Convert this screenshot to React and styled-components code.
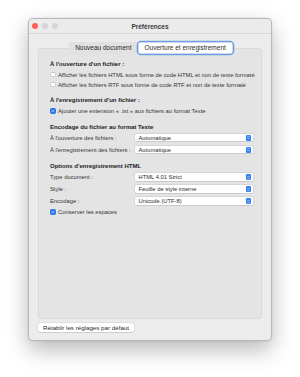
import styled, {createGlobalStyle} from 'styled-components'

const Global = createGlobalStyle`
  html, body {
    margin: 0;
    background: #ffffff;
  }
  body {
    font-family: "Liberation Sans", Arial, sans-serif;
    color: #262626;
  }
`

const Page = styled.div`
  width: 300px;
  height: 377px;
  padding: 18px 0 0 28px;
  box-sizing: border-box;
`

const Window = styled.div`
  width: 244px;
  height: 323px;
  display: flex;
  flex-direction: column;
  background: #ececec;
  border-radius: 5px;
  border: 0.5px solid rgba(0,0,0,0.22);
  box-shadow: 0 9px 22px rgba(0,0,0,0.28), 0 0 2px rgba(0,0,0,0.12);
  box-sizing: border-box;
  overflow: hidden;
`

const TitleBar = styled.div`
  height: 14px;
  display: grid;
  grid-template-columns: 60px 1fr 60px;
  align-items: center;
  border-bottom: 1px solid #d6d6d6;
  background: #ebebeb;
`

const Lights = styled.div`
  display: flex;
  gap: 4px;
  padding-left: 3px;
`

const Light = styled.span`
  width: 6px;
  height: 6px;
  border-radius: 50%;
  background: ${p => p.color};
`

const Title = styled.div`
  text-align: center;
  font-size: 6.5px;
  font-weight: bold;
  color: #3a3a3a;
`

const Body = styled.div`
  flex: 1;
  display: flex;
  flex-direction: column;
  padding: 8px 9px 8px 9px;
`

const Tabs = styled.div`
  align-self: center;
  display: flex;
  align-items: center;
  height: 12px;
  margin-left: 2px;
  margin-bottom: -6px;
  background: #e1e1e1;
  border-radius: 3px;
  position: relative;
  z-index: 1;
`

const Tab = styled.div`
  height: 12px;
  line-height: 12px;
  padding: 0 6px;
  font-size: 6.5px;
  white-space: nowrap;
  color: #2a2a2a;
  box-sizing: border-box;
  ${p => p.active && `
    padding: 0 7px;
    background: #ffffff;
    border-radius: 3px;
    box-shadow: 0 0 0 1.3px #6c9fe2, inset 0 0 0 0.5px #8fb6ea;
  `}
`

const Panel = styled.div`
  flex: 1;
  background: #e4e4e4;
  border: 0.5px solid #d9d9d9;
  border-radius: 3px;
  padding: 9.5px 8px 0 11px;
  display: flex;
  flex-direction: column;
  white-space: nowrap;
`

const Section = styled.div`
  display: flex;
  flex-direction: column;
  & + & {
    margin-top: 5.5px;
  }
`

const Heading = styled.div`
  height: 10px;
  line-height: 10px;
  font-size: 6px;
  font-weight: bold;
  color: #222;
`

const CheckRow = styled.label`
  height: 10px;
  display: flex;
  align-items: center;
  gap: 2.5px;
  font-size: 5.8px;
  color: #333;
  ${Heading} + & {
    margin-top: 1px;
  }
`

const Box = styled.span`
  width: 5.5px;
  height: 5.5px;
  flex: none;
  border-radius: 1.5px;
  box-sizing: border-box;
  display: flex;
  align-items: center;
  justify-content: center;
  background: ${p => (p.checked ? '#2d7ff3' : '#ffffff')};
  border: 0.5px solid ${p => (p.checked ? '#2a74e0' : '#c9c9c9')};
`

const PopupRow = styled.div`
  height: 12px;
  display: grid;
  grid-template-columns: 85px 1fr;
  align-items: center;
  font-size: 5.8px;
  color: #333;
`

const Popup = styled.div`
  height: 7.5px;
  background: #ffffff;
  border-radius: 1.5px;
  box-shadow: 0 0 0 0.5px rgba(0,0,0,0.12), 0 0.5px 0.5px rgba(0,0,0,0.1);
  display: flex;
  align-items: center;
  justify-content: space-between;
  padding: 0 2.5px 0 3.5px;
  font-size: 5.8px;
  color: #2a2a2a;
`

const Stepper = styled.span`
  width: 4.5px;
  height: 6px;
  border-radius: 1.2px;
  background: #2f7ff2;
  display: flex;
  align-items: center;
  justify-content: center;
`

const Footer = styled.div`
  display: flex;
  margin-top: 4px;
`

const Button = styled.button`
  height: 9.5px;
  padding: 0 5px;
  border: none;
  border-radius: 2px;
  background: #ffffff;
  box-shadow: 0 0 0 0.5px rgba(0,0,0,0.12), 0 0.5px 0.5px rgba(0,0,0,0.15);
  font-family: "Liberation Sans", Arial, sans-serif;
  font-size: 6.2px;
  color: #2a2a2a;
  line-height: 9.5px;
  white-space: nowrap;
`

function Check({checked, children}) {
  return (
    <CheckRow>
      <Box checked={checked}>
        {checked && (
          <svg width="4" height="4" viewBox="0 0 10 10">
            <path d="M2 5.2 L4.2 7.4 L8.2 2.6" fill="none" stroke="#fff" strokeWidth="1.8" strokeLinecap="round" strokeLinejoin="round" />
          </svg>
        )}
      </Box>
      {children}
    </CheckRow>
  )
}

function Select({label, value}) {
  return (
    <PopupRow>
      <span>{label}</span>
      <Popup>
        <span>{value}</span>
        <Stepper>
          <svg width="3" height="5" viewBox="0 0 6 10">
            <path d="M1 3.8 L3 1.8 L5 3.8 M1 6.2 L3 8.2 L5 6.2" fill="none" stroke="#fff" strokeWidth="1.1" strokeLinecap="round" strokeLinejoin="round" />
          </svg>
        </Stepper>
      </Popup>
    </PopupRow>
  )
}

export default function App() {
  return (
    <Page>
      <Global />
      <Window>
        <TitleBar>
          <Lights>
            <Light color="#fe5f57" />
            <Light color="#d6d6d6" />
            <Light color="#d6d6d6" />
          </Lights>
          <Title>Préférences</Title>
          <span />
        </TitleBar>
        <Body>
          <Tabs>
            <Tab>Nouveau document</Tab>
            <Tab active>Ouverture et enregistrement</Tab>
          </Tabs>
          <Panel>
            <Section>
              <Heading>À l'ouverture d'un fichier :</Heading>
              <Check>Afficher les fichiers HTML sous forme de code HTML et non de texte formaté</Check>
              <Check>Afficher les fichiers RTF sous forme de code RTF et non de texte formaté</Check>
            </Section>
            <Section>
              <Heading>À l'enregistrement d'un fichier :</Heading>
              <Check checked>Ajouter une extension « .txt » aux fichiers au format Texte</Check>
            </Section>
            <Section>
              <Heading>Encodage du fichier au format Texte</Heading>
              <Select label="À l'ouverture des fichiers :" value="Automatique" />
              <Select label="À l'enregistrement des fichiers :" value="Automatique" />
            </Section>
            <Section>
              <Heading>Options d'enregistrement HTML</Heading>
              <Select label="Type document :" value="HTML 4.01 Strict" />
              <Select label="Style :" value="Feuille de style interne" />
              <Select label="Encodage :" value="Unicode (UTF-8)" />
              <Check checked>Conserver les espaces</Check>
            </Section>
          </Panel>
          <Footer>
            <Button>Rétablir les réglages par défaut</Button>
          </Footer>
        </Body>
      </Window>
    </Page>
  )
}
